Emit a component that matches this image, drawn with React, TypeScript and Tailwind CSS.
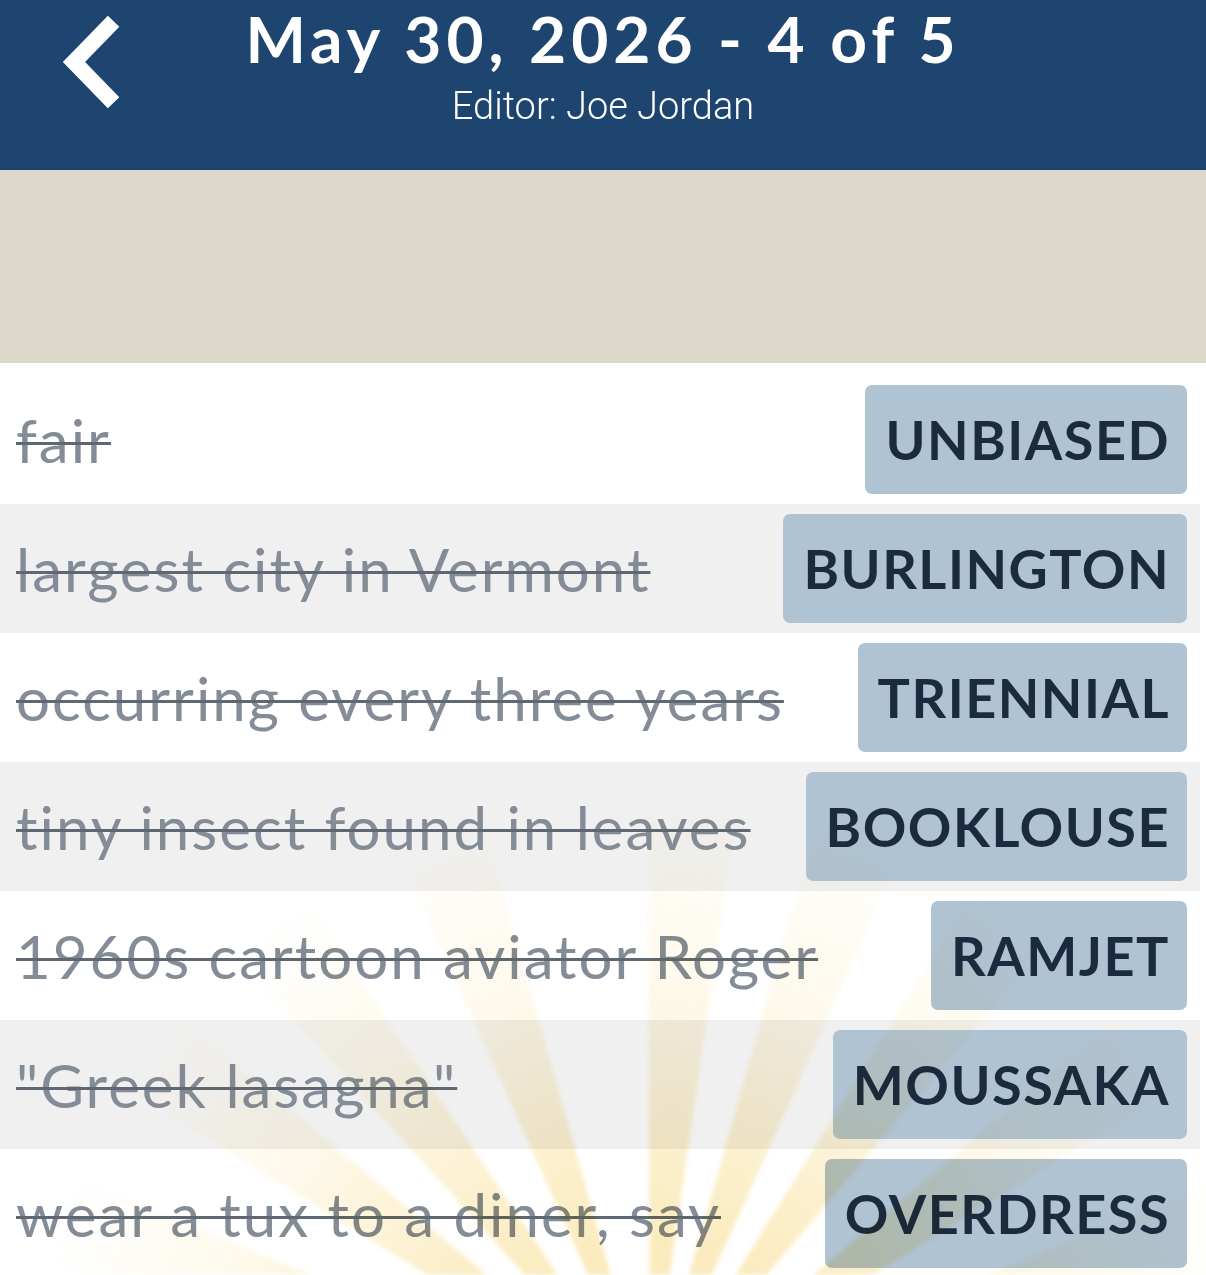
import React from "react";

type Entry = { clue: string; answer: string };

const entries: Entry[] = [
  { clue: "fair", answer: "UNBIASED" },
  { clue: "largest city in Vermont", answer: "BURLINGTON" },
  { clue: "occurring every three years", answer: "TRIENNIAL" },
  { clue: "tiny insect found in leaves", answer: "BOOKLOUSE" },
  { clue: "1960s cartoon aviator Roger", answer: "RAMJET" },
  { clue: "\"Greek lasagna\"", answer: "MOUSSAKA" },
  { clue: "wear a tux to a diner, say", answer: "OVERDRESS" },
];

// Faint sunburst that glows up from below the last rows
function Sunburst() {
  const cx = 650;
  const cy = 1050;
  const R = 1100;
  const angles = [-72, -54, -38, -20, 4, 20, 36, 54, 72];
  const rays = angles.map((deg) => {
    const mid = (deg * Math.PI) / 180;
    const half = (4.2 * Math.PI) / 180;
    const a1 = mid - half;
    const a2 = mid + half;
    const p1 = `${cx + R * Math.sin(a1)},${cy - R * Math.cos(a1)}`;
    const p2 = `${cx + R * Math.sin(a2)},${cy - R * Math.cos(a2)}`;
    return `${cx},${cy} ${p1} ${p2}`;
  });
  return (
    <svg
      className="pointer-events-none absolute inset-0 mix-blend-multiply blur-[2px]"
      width="1206"
      height="912"
      viewBox="0 0 1206 912"
    >
      <defs>
        <radialGradient id="glow" gradientUnits="userSpaceOnUse" cx={cx} cy={cy} r="620">
          <stop offset="0" stopColor="#f6d474" stopOpacity="0.6" />
          <stop offset="0.35" stopColor="#f6d474" stopOpacity="0.42" />
          <stop offset="0.7" stopColor="#f6d474" stopOpacity="0.14" />
          <stop offset="1" stopColor="#f6d474" stopOpacity="0" />
        </radialGradient>
      </defs>
      {rays.map((pts, i) => (
        <polygon key={i} points={pts} fill="url(#glow)" />
      ))}
    </svg>
  );
}

function Row({ entry, shaded }: { entry: Entry; shaded: boolean }) {
  return (
    <div
      className={`flex h-[129px] items-center justify-between pl-[16px] pr-[13px] ${
        shaded ? "bg-[#f0f0f0]" : "bg-white"
      }`}
    >
      <span className="text-[60px] leading-none tracking-[2px] text-[#838c97] line-through decoration-[#5f6872] decoration-[3px] whitespace-nowrap">
        {entry.clue}
      </span>
      <span className="flex h-[109px] items-center rounded-[7px] bg-[#b0c3d3] pl-[20px] pr-[17px] text-[54px] font-bold leading-none tracking-[1.5px] text-[#1b2a3f]">
        {entry.answer}
      </span>
    </div>
  );
}

export default function App() {
  return (
    <div className="w-[1206px] h-[1275px] overflow-hidden bg-white font-['Lato','Noto_Sans',sans-serif]">
      <header className="relative h-[170px] bg-[#1e456f] text-white">
        <button className="absolute left-[56px] top-[15px] flex h-[94px] w-[66px] items-center justify-center">
          <svg width="66" height="94" viewBox="0 0 66 94">
            <path d="M52 12 L18 47 L52 82" fill="none" stroke="white" strokeWidth="16" strokeLinecap="square" strokeLinejoin="miter" />
          </svg>
        </button>
        <div className="flex flex-col items-center">
          <h1 className="text-[64px] font-bold leading-[77px] tracking-[5px]">May 30, 2026 - 4 of 5</h1>
          <p className="mt-[9px] text-[38px] leading-[40px] font-['Roboto',sans-serif] font-light">Editor: Joe Jordan</p>
        </div>
      </header>
      <div className="h-[193px] bg-[#ddd8ca]" />
      <div className="relative h-[912px] pt-[12px] pr-[6px]">
        {entries.map((e, i) => (
          <Row key={e.answer} entry={e} shaded={i % 2 === 1} />
        ))}
        <Sunburst />
      </div>
    </div>
  );
}
